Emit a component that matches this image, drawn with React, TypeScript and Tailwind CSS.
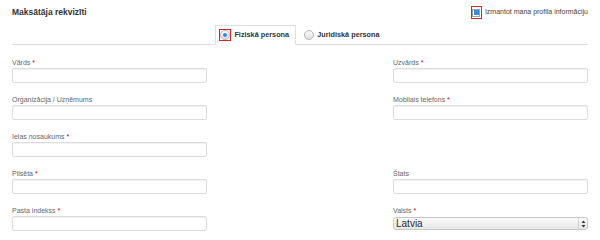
import { useState } from "react";

type Field = { label: string; required?: boolean; kind?: "input" | "select" | "empty" };

const leftFields: Field[] = [
  { label: "Vārds", required: true },
  { label: "Organizācija / Uzņēmums" },
  { label: "Ielas nosaukums", required: true },
  { label: "Pilsēta", required: true },
  { label: "Pasta indekss", required: true },
];

const rightFields: Field[] = [
  { label: "Uzvārds", required: true },
  { label: "Mobilais telefons", required: true },
  { label: "", kind: "empty" },
  { label: "Štats" },
  { label: "Valsts", required: true, kind: "select" },
];

function FormField({ field }: { field: Field }) {
  if (field.kind === "empty") return <div className="h-[37px]" />;
  return (
    <div className="flex h-[37px] flex-col">
      <label className="h-[10px] text-[7px] leading-[10px] text-[#666]">
        {field.label}
        {field.required && <span className="text-[#c00]"> *</span>}
      </label>
      {field.kind === "select" ? (
        <div className="mt-[1px] flex h-[13px] items-center justify-between rounded-[3px] border border-[#c8c8c8] bg-gradient-to-b from-[#fbfbfb] to-[#e6e6e6] pl-[2px]">
          <span className="text-[10px] leading-[11px] font-normal text-[#2a2a2a]">Latvia</span>
          <span className="flex h-full w-[9px] items-center justify-center border-l border-[#d4d4d4]">
            <svg width="5" height="8" viewBox="0 0 5 8">
              <path d="M2.5 0.5 L4.5 3 L0.5 3 Z" fill="#333" />
              <path d="M2.5 7.5 L4.5 5 L0.5 5 Z" fill="#333" />
            </svg>
          </span>
        </div>
      ) : (
        <input
          className="h-[15px] w-full rounded-[2px] border border-[#dcdcdc] bg-white shadow-[inset_0_1px_1px_rgba(0,0,0,0.06)] outline-none"
          type="text"
        />
      )}
    </div>
  );
}

function Radio({ checked }: { checked: boolean }) {
  return (
    <span className="flex h-[10px] w-[10px] items-center justify-center rounded-full border border-[#b5b5b5] bg-gradient-to-b from-[#fdfdfd] to-[#dedede]">
      {checked && <span className="h-[4px] w-[4px] rounded-full bg-[#2f8be6]" />}
    </span>
  );
}

export default function App() {
  const [personType, setPersonType] = useState<"fiz" | "jur">("fiz");

  return (
    <div
      className="h-[240px] w-[600px] overflow-hidden bg-white px-[12px] text-[#333]"
      style={{ fontFamily: '"Liberation Sans", Arial, sans-serif' }}
    >
      {/* header */}
      <div className="flex h-[25px] items-center justify-between">
        <h2 className="text-[8.5px] font-bold text-[#333]">Maksātāja rekvizīti</h2>
        <label className="flex items-center gap-[3px] text-[7px] text-[#444]">
          <span className="flex h-[13px] w-[11px] items-center justify-center border border-[#e02020]">
            <span className="flex h-[8px] w-[8px] items-center justify-center border border-[#a0a0a0] bg-white">
              <span className="h-[5px] w-[5px] bg-[#2f8be6]" />
            </span>
          </span>
          <span className="text-[#444]">Izmantot mana profila informāciju</span>
        </label>
      </div>

      {/* person type tabs */}
      <div className="flex h-[20px] items-end justify-center border-b border-[#dedede]">
        <div className="flex items-end">
          <button
            className={`mb-[-1px] flex h-[20px] items-center gap-[3px] pl-[3px] pr-[6px] text-[7.3px] font-bold ${personType === "fiz" ? "border border-b-white border-[#dedede] bg-white" : "border border-transparent"}`}
            onClick={() => setPersonType("fiz")}
          >
            <span className="flex h-[12px] w-[12px] items-center justify-center border border-[#e02020]">
              <Radio checked={personType === "fiz"} />
            </span>
            <span>Fiziskā persona</span>
          </button>
          <button
            className={`mb-[-1px] ml-[3px] flex h-[20px] items-center gap-[3px] px-[4px] text-[7.3px] font-bold ${personType === "jur" ? "border border-b-white border-[#dedede] bg-white" : "border border-transparent"}`}
            onClick={() => setPersonType("jur")}
          >
            <Radio checked={personType === "jur"} />
            <span>Juridiskā persona</span>
          </button>
        </div>
      </div>

      {/* fields */}
      <div className="mt-[13px] flex justify-between">
        <div className="flex w-[195px] flex-col">
          {leftFields.map((f) => (
            <FormField key={f.label} field={f} />
          ))}
        </div>
        <div className="flex w-[195px] flex-col">
          {rightFields.map((f, i) => (
            <FormField key={f.label || i} field={f} />
          ))}
        </div>
      </div>
    </div>
  );
}
